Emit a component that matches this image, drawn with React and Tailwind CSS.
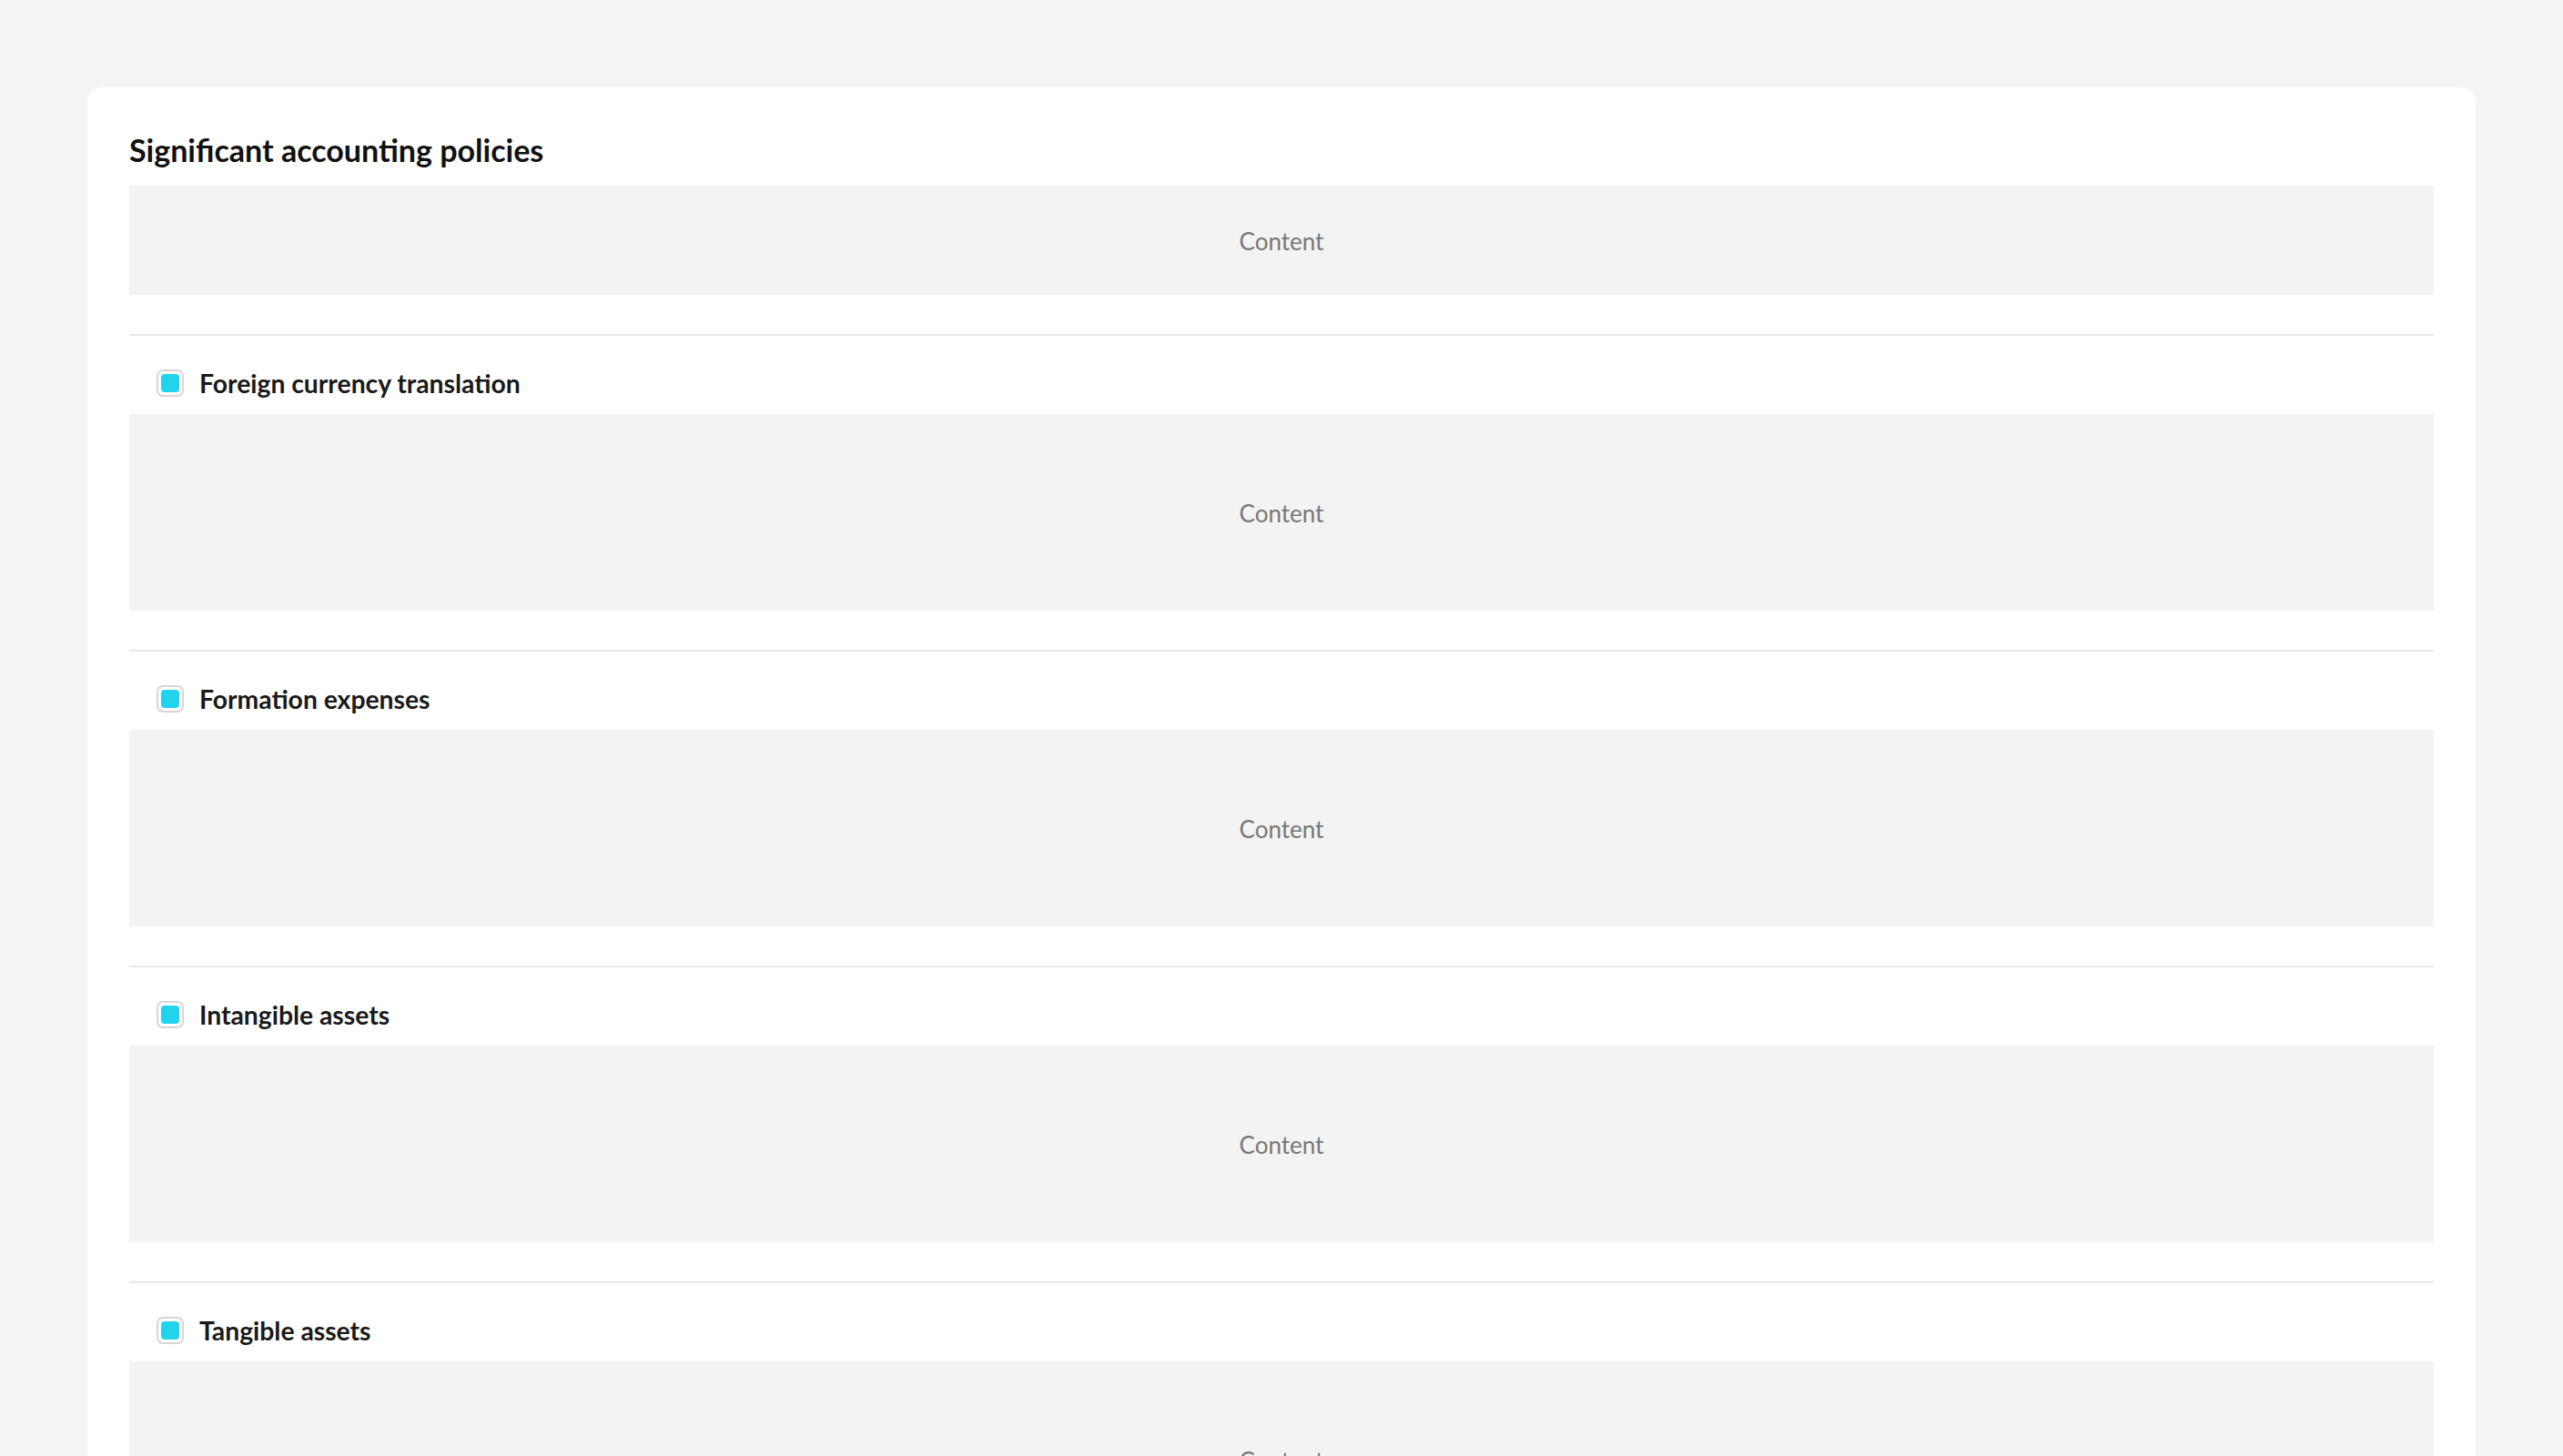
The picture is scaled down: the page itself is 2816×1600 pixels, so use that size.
import React from 'react';

const sections = [
  'Foreign currency translation',
  'Formation expenses',
  'Intangible assets',
  'Tangible assets',
  'Financial assets',
];

const ContentBox = ({ tall = true }) => (
  <div
    className={`flex items-center justify-center bg-[#f3f3f3] pt-[3px] text-[26px] text-[#777777] ${
      tall ? 'h-[216px]' : 'h-[120px]'
    }`}
  >
    Content
  </div>
);

const Checkbox = () => (
  <div className="flex h-[30px] w-[30px] items-center justify-center rounded-[7px] border-2 border-[#d6d6d6] bg-white">
    <div className="h-[20px] w-[20px] rounded-[4px] bg-[#22d3ee]" />
  </div>
);

export default function App() {
  return (
    <div className="min-h-screen bg-[#f4f4f4] px-[96px] pt-[96px] font-['Lato',sans-serif]">
      <div className="rounded-t-2xl bg-white px-[46px] pt-[50px] pb-[40px]">
        <h1 className="mb-[20px] text-[34px] font-bold leading-[38px] text-[#111111]">
          Significant accounting policies
        </h1>
        <ContentBox tall={false} />

        {sections.map((title) => (
          <div key={title} className="mt-[43px] border-t-2 border-[#e8e8e8]">
            <div className="mt-[37px] mb-[19px] flex h-[30px] items-center gap-[17px] pl-[30px]">
              <Checkbox />
              <span className="text-[28.3px] font-bold text-[#1a1a1a]">{title}</span>
            </div>
            <ContentBox />
          </div>
        ))}
      </div>
    </div>
  );
}
